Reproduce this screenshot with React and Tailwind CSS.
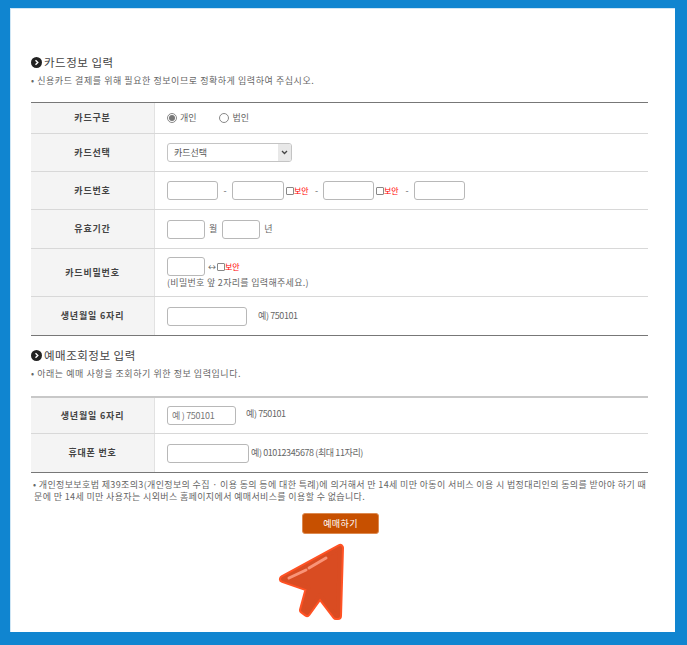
function Heading({ title, sub, subTrack }) {
  return (
    <div>
      <div className="flex items-center h-[14px] gap-[2px]">
        <span className="w-[11px] h-[11px] rounded-full bg-[#222] flex items-center justify-center">
          <svg width="7" height="7" viewBox="0 0 7 7"><path d="M2.5 1.2 L4.8 3.5 L2.5 5.8" fill="none" stroke="#fff" strokeWidth="1.4" /></svg>
        </span>
        <span className="text-[11.5px] leading-[14px] text-[#444] tracking-[0.5px]">{title}</span>
      </div>
      <p className={`mt-[6px] text-[9px] leading-[12px] text-[#666] ${subTrack}`}>• {sub}</p>
    </div>
  )
}

function Row({ label, h, children, last }) {
  return (
    <div className={`flex ${h} ${last ? '' : 'border-b border-[#d8d8d8]'}`}>
      <div className="w-[123px] shrink-0 bg-[#f4f4f4] flex items-center justify-center text-[9px] font-bold text-[#444] tracking-[0.8px]">{label}</div>
      <div className="w-px bg-[#e2e2e2]" />
      <div className="flex-1 pl-[12px] flex items-center text-[9px] text-[#666]">{children}</div>
    </div>
  )
}

function Box({ w, children }) {
  return <div className={`${w} h-[19px] border border-[#b8b8b8] rounded-[3px] bg-white shrink-0 flex items-center pl-[4px] text-[9px] text-[#777] tracking-[-0.3px]`}>{children}</div>
}

function Secure() {
  return (
    <span className="flex items-center w-[24px] shrink-0">
      <span className="w-[8px] h-[8px] border border-[#888] rounded-[1px] bg-white" />
      <span className="text-[8px] text-[#f00]">보안</span>
    </span>
  )
}

export default function App() {
  return (
    <div className="w-[687px] h-[645px] bg-[#1085d0] pt-[8px] pl-[10px]" style={{ fontFamily: '"Noto Sans CJK KR", "Liberation Sans", sans-serif' }}>
      <div className="w-[665px] h-[624px] bg-white border-l border-t border-[#cfe6f5] pl-[20px] pt-[46px]">
        <div className="w-[617px]">
          <Heading title="카드정보 입력" subTrack="tracking-[0.55px]" sub="신용카드 결제를 위해 필요한 정보이므로 정확하게 입력하여 주십시오." />

          <div className="mt-[15px] border-t border-b border-[#777]">
            <Row label="카드구분" h="h-[31px]">
              <span className="flex items-center gap-[3px]">
                <span className="w-[10px] h-[10px] rounded-full border border-[#888] flex items-center justify-center"><span className="w-[6px] h-[6px] rounded-full bg-[#777]" /></span>
                개인
              </span>
              <span className="flex items-center gap-[4px] ml-[22px]">
                <span className="w-[10px] h-[10px] rounded-full border border-[#888]" />
                법인
              </span>
            </Row>
            <Row label="카드선택" h="h-[38px]">
              <div className="w-[125px] h-[19px] border border-[#c4c4c4] rounded-[3px] flex items-center justify-between pl-[6px] text-[#555]">
                카드선택
                <span className="w-[13px] h-full bg-[#e8e8e8] rounded-r-[2px] flex items-center justify-center">
                  <svg width="7" height="5" viewBox="0 0 7 5"><path d="M1 1 L3.5 3.5 L6 1" fill="none" stroke="#444" strokeWidth="1.3" /></svg>
                </span>
              </div>
            </Row>
            <Row label="카드번호" h="h-[38px]">
              <Box w="w-[51px]" />
              <span className="w-[14px] text-center shrink-0">-</span>
              <Box w="w-[52px]" />
              <span className="ml-[2px]"><Secure /></span>
              <span className="w-[13px] text-center shrink-0">-</span>
              <Box w="w-[51px]" />
              <span className="ml-[2px]"><Secure /></span>
              <span className="w-[14px] text-center shrink-0">-</span>
              <Box w="w-[51px]" />
            </Row>
            <Row label="유효기간" h="h-[39px]">
              <Box w="w-[38px]" />
              <span className="ml-[4px] mr-[5px]">월</span>
              <Box w="w-[38px]" />
              <span className="ml-[4px]">년</span>
            </Row>
            <Row label="카드비밀번호" h="h-[48px]">
              <div>
                <div className="flex items-center">
                  <Box w="w-[38px]" />
                  <span className="ml-[3px] mr-[1px] text-[8px] leading-none">↔</span>
                  <Secure />
                </div>
                <p className="leading-[11px] mt-[1px] whitespace-nowrap tracking-[0.3px]">(비밀번호 앞 2자리를 입력해주세요.)</p>
              </div>
            </Row>
            <Row label="생년월일 6자리" h="h-[38px]" last>
              <Box w="w-[80px]" />
              <span className="ml-[11px] tracking-[-0.4px]">예) 750101</span>
            </Row>
          </div>

          <div className="mt-[12px]">
            <Heading title="예매조회정보 입력" subTrack="tracking-[0.55px]" sub="아래는 예매 사항을 조회하기 위한 정보 입력입니다." />
          </div>

          <div className="mt-[16px] border-t-2 border-[#c8c8c8]">
            <Row label="생년월일 6자리" h="h-[36px]">
              <Box w="w-[69px]">예 ) 750101</Box>
              <span className="ml-[10px] mb-[3px] tracking-[-0.4px]">예) 750101</span>
            </Row>
            <Row label="휴대폰 번호" h="h-[38px]" last>
              <Box w="w-[82px]" />
              <span className="ml-[2px] tracking-[-0.4px]">예) 01012345678 (최대 11자리)</span>
            </Row>
          </div>
          <div className="border-t border-[#777]" />

          <p className="mt-[6px] text-[9px] leading-[12px] text-[#666] pl-[3px] -indent-[1px] tracking-[0.36px]">
            • 개인정보보호법 제39조의3(개인정보의 수집 · 이용 동의 등에 대한 특례)에 의거해서 만 14세 미만 아동이 서비스 이용 시 법정대리인의 동의를 받아야 하기 때문에 만 14세 미만 사용자는 시외버스 홈페이지에서 예매서비스를 이용할 수 없습니다.
          </p>

          <button className="block mt-[10px] ml-[271px] w-[77px] h-[21px] bg-[#c75000] border border-[#dd8a50] rounded-[3px] text-[9px] text-white tracking-[0.4px]">예매하기</button>

          <svg className="block mt-[9px] ml-[247px]" width="68" height="78" viewBox="0 0 68 78">
            <path d="M62 5 L60 73 L58 73 L42 52 L29 70 L25 67 L31 45 L5 36 Z" fill="#ff5224" stroke="#ff5224" strokeWidth="8" strokeLinejoin="round" />
            <path d="M62 5 L60 73 L58 73 L42 52 L29 70 L25 67 L31 45 L5 36 Z" fill="#d94c22" stroke="#d94c22" strokeWidth="4" strokeLinejoin="round" />
            <path d="M11 35 L28 27" stroke="#f99478" strokeWidth="3" strokeLinecap="round" />
            <path d="M31 25 L48 15" stroke="#f99478" strokeWidth="3" strokeLinecap="round" />
          </svg>
        </div>
      </div>
    </div>
  )
}
